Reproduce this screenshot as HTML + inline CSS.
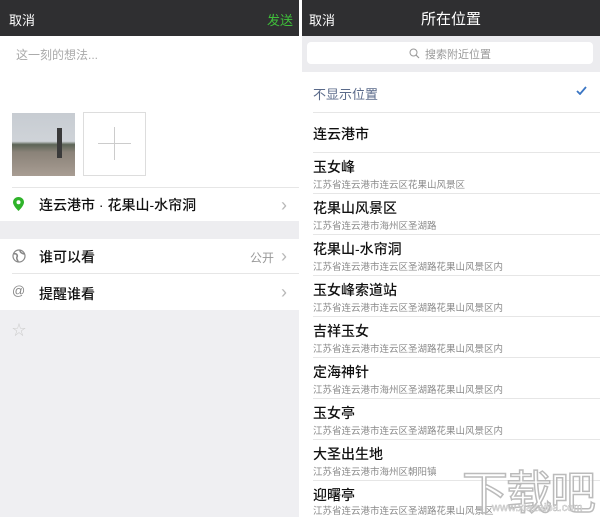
<!DOCTYPE html>
<html><head><meta charset="utf-8"><style>
*{margin:0;padding:0;box-sizing:border-box}
body{width:600px;height:517px;overflow:hidden;background:#fff;font-family:"Liberation Sans","Noto Sans CJK SC",sans-serif;position:relative}
.abs{position:absolute}
.hdr{background:#2f2f31;height:36px;top:0}
.l{left:0;width:299px}
.r{left:302px;width:298px}
.sep{position:absolute;height:1px;background:#e6e6e6}
.chev{position:absolute;color:#b8b8b8;font-size:18px;line-height:1}
.t{position:absolute;font-size:14px;color:#111;font-weight:500}
.s{position:absolute;font-size:9.5px;color:#8a8a8a}
</style></head><body>
<div class="abs hdr l"></div>
<div class="abs" style="left:9px;top:10px;color:#fff;font-size:13px">取消</div>
<div class="abs" style="left:267px;top:10px;color:#3fbf3a;font-size:13px">发送</div>
<div class="abs" style="left:16px;top:46px;color:#aaa;font-size:12px">这一刻的想法...</div>
<div class="abs" style="left:12px;top:113px;width:63px;height:63px;background:linear-gradient(#c7ccd2 0,#cfd3d8 45%,#5c6456 50%,#8a8278 62%,#a89d93 100%)"></div>
<div class="abs" style="left:57px;top:128px;width:5px;height:30px;background:#3a3a3a"></div>
<div class="abs" style="left:83px;top:112px;width:63px;height:64px;border:1px solid #ddd"></div>
<div class="abs" style="left:98px;top:143px;width:33px;height:1px;background:#ccc"></div>
<div class="abs" style="left:114px;top:127px;width:1px;height:33px;background:#ccc"></div>
<div class="sep" style="left:12px;top:187px;width:287px"></div>
<svg class="abs" style="left:13px;top:197px" width="11" height="14" viewBox="0 0 11 14"><path d="M5.5 0C2.5 0 0 2.3 0 5.3 0 9 5.5 14 5.5 14S11 9 11 5.3C11 2.3 8.5 0 5.5 0z" fill="#2fb32a"/><circle cx="5.5" cy="5.3" r="2" fill="#fff"/></svg>
<div class="t" style="left:39px;top:195px;font-size:14px">连云港市 · 花果山-水帘洞</div>
<div class="chev" style="left:281px;top:196px">›</div>
<div class="abs" style="left:0;top:221px;width:299px;height:18px;background:#ededf0"></div>
<svg class="abs" style="left:12px;top:249px" width="14" height="14" viewBox="0 0 14 14"><circle cx="7" cy="7" r="6" fill="none" stroke="#888" stroke-width="1.2"/><path d="M2 5c2-1 4 1 3 3s1 3 1 5M8 1.5c0 2 2 3 4.5 3.5" fill="none" stroke="#888" stroke-width="1.6"/></svg>
<div class="t" style="left:39px;top:247px">谁可以看</div>
<div class="abs" style="left:250px;top:249px;font-size:12px;color:#999">公开</div>
<div class="chev" style="left:281px;top:247px">›</div>
<div class="sep" style="left:12px;top:273px;width:287px"></div>
<div class="abs" style="left:12px;top:283px;font-size:13px;color:#888">@</div>
<div class="t" style="left:39px;top:284px">提醒谁看</div>
<div class="chev" style="left:281px;top:283px">›</div>
<div class="abs" style="left:0;top:310px;width:299px;height:207px;background:#efeff2"></div>
<div class="abs" style="left:12px;top:320px;font-size:14px;color:#ccc">☆</div>
<div class="abs" style="left:299px;top:0;width:3px;height:517px;background:#fff"></div>
<div class="abs hdr r"></div>
<div class="abs" style="left:309px;top:10px;color:#fff;font-size:13px">取消</div>
<div class="abs" style="left:421px;top:8px;color:#fff;font-size:15px">所在位置</div>
<div class="abs" style="left:302px;top:36px;width:298px;height:36px;background:#ececef"></div>
<div class="abs" style="left:307px;top:42px;width:286px;height:22px;background:#fff;border-radius:4px"></div>
<svg class="abs" style="left:409px;top:48px" width="11" height="11" viewBox="0 0 11 11"><circle cx="4.5" cy="4.5" r="3.5" fill="none" stroke="#999" stroke-width="1"/><path d="M7 7l3 3" stroke="#999" stroke-width="1.2"/></svg>
<div class="abs" style="left:425px;top:46px;font-size:11px;color:#999">搜索附近位置</div>
<div class="abs" style="left:313px;top:84px;font-size:13px;color:#5a6a8a">不显示位置</div>
<svg class="abs" style="left:576px;top:86px" width="11" height="9" viewBox="0 0 11 9"><path d="M1 5l3 3 6-7" fill="none" stroke="#3b76c4" stroke-width="1.8"/></svg>
<div class="sep" style="left:313px;top:112px;width:287px"></div>
<div class="t" style="left:313px;top:124px">连云港市</div>
<div class="sep" style="left:313px;top:152px;width:287px"></div>
<div class="t" style="left:313px;top:157px">玉女峰</div><div class="s" style="left:313px;top:177px">江苏省连云港市连云区花果山风景区</div>
<div class="sep" style="left:313px;top:193px;width:287px"></div>
<div class="t" style="left:313px;top:198px">花果山风景区</div><div class="s" style="left:313px;top:218px">江苏省连云港市海州区圣湖路</div>
<div class="sep" style="left:313px;top:234px;width:287px"></div>
<div class="t" style="left:313px;top:239px">花果山-水帘洞</div><div class="s" style="left:313px;top:259px">江苏省连云港市连云区圣湖路花果山风景区内</div>
<div class="sep" style="left:313px;top:275px;width:287px"></div>
<div class="t" style="left:313px;top:280px">玉女峰索道站</div><div class="s" style="left:313px;top:300px">江苏省连云港市连云区圣湖路花果山风景区内</div>
<div class="sep" style="left:313px;top:316px;width:287px"></div>
<div class="t" style="left:313px;top:321px">吉祥玉女</div><div class="s" style="left:313px;top:341px">江苏省连云港市连云区圣湖路花果山风景区内</div>
<div class="sep" style="left:313px;top:357px;width:287px"></div>
<div class="t" style="left:313px;top:362px">定海神针</div><div class="s" style="left:313px;top:382px">江苏省连云港市海州区圣湖路花果山风景区内</div>
<div class="sep" style="left:313px;top:398px;width:287px"></div>
<div class="t" style="left:313px;top:403px">玉女亭</div><div class="s" style="left:313px;top:423px">江苏省连云港市连云区圣湖路花果山风景区内</div>
<div class="sep" style="left:313px;top:439px;width:287px"></div>
<div class="t" style="left:313px;top:444px">大圣出生地</div><div class="s" style="left:313px;top:464px">江苏省连云港市海州区朝阳镇</div>
<div class="sep" style="left:313px;top:480px;width:287px"></div>
<div class="t" style="left:313px;top:485px">迎曙亭</div><div class="s" style="left:313px;top:503px">江苏省连云港市连云区圣湖路花果山风景区</div>
<div class="abs" style="left:462px;top:470px;font-size:46px;color:rgba(255,255,255,0.6);-webkit-text-stroke:1.5px #bbb;letter-spacing:-2px;line-height:1">下载吧</div>
<div class="abs" style="left:492px;top:502px;font-size:11px;color:rgba(255,255,255,0.6);-webkit-text-stroke:0.5px #bbb">www.xiazaiba.com</div>
</body></html>
